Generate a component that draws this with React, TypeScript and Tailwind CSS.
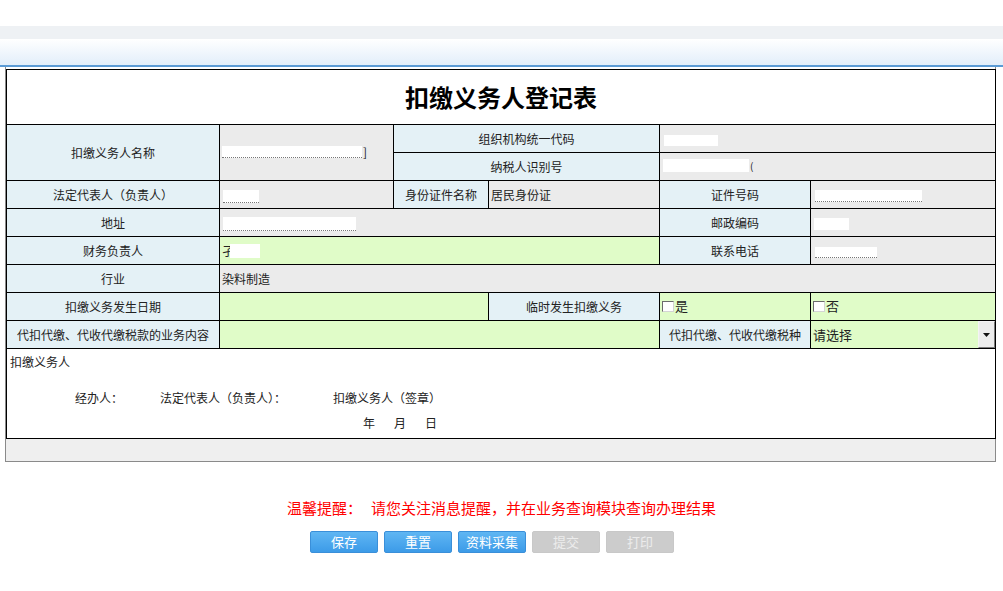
const label = "border border-black bg-[#e4f1f6] text-center";
const gray = "border border-black bg-[#ebebeb] text-left pl-[2px]";
const green = "border border-black bg-[#e0fcc8] text-left pl-[2px]";

function Blank({ className }: { className: string }) {
  return (
    <span
      className={
        "inline-block align-middle bg-white border-b border-dotted border-[#777] " +
        className
      }
    />
  );
}

function Check({ text }: { text: string }) {
  return (
    <span className="inline-flex items-center">
      <span className="inline-block w-[12px] h-[11px] bg-white border border-t-[#6b6b6b] border-l-[#6b6b6b] border-b-[#d4d4d4] border-r-[#d4d4d4]" />
      <span className="ml-[1px] text-[13px]">{text}</span>
    </span>
  );
}

function Btn({ text, disabled }: { text: string; disabled?: boolean }) {
  return disabled ? (
    <button className="w-[68px] h-[22px] rounded-[2px] border border-[#c8c8c8] bg-[#cccccc] text-[13px] text-[#ececec]">
      {text}
    </button>
  ) : (
    <button className="w-[68px] h-[22px] rounded-[2px] border border-[#3a8fd9] bg-gradient-to-b from-[#5fb6f3] to-[#3c9be8] text-[13px] text-white">
      {text}
    </button>
  );
}

export default function App() {
  return (
    <div className="min-h-[591px] bg-white font-['Noto_Sans_CJK_SC','Liberation_Sans',sans-serif] text-[#222]">
      {/* top bands */}
      <div className="h-[26px] bg-white" />
      <div className="h-[13px] bg-[#eef1f4]" />
      <div className="h-[26px] bg-gradient-to-b from-white to-[#e2eefa]" />
      <div className="h-[2px] bg-[#5b9bd5]" />

      {/* form */}
      <div className="ml-[5px] w-[991px] border-x border-b border-[#8a8a8a] pt-[2px]">
        <table className="w-full table-fixed border-collapse border border-black text-[12px] leading-[16px]">
          <colgroup>
            <col className="w-[213px]" />
            <col className="w-[174px]" />
            <col className="w-[95px]" />
            <col className="w-[171px]" />
            <col className="w-[151px]" />
            <col className="w-[185px]" />
          </colgroup>
          <tbody>
            <tr className="h-[55px]">
              <td colSpan={6} className="border border-black bg-white text-center text-[24px] font-bold text-black">
                扣缴义务人登记表
              </td>
            </tr>
            <tr className="h-[28px]">
              <td rowSpan={2} className={label}>扣缴义务人名称</td>
              <td rowSpan={2} className={gray}>
                <span className="inline-flex items-center">
                  <Blank className="w-[140px] h-[12px]" />
                  <span className="ml-[1px]">]</span>
                </span>
              </td>
              <td colSpan={2} className={label}>组织机构统一代码</td>
              <td colSpan={2} className={gray}>
                <Blank className="ml-[2px] w-[54px] h-[11px] border-b-0" />
              </td>
            </tr>
            <tr className="h-[28px]">
              <td colSpan={2} className={label}>纳税人识别号</td>
              <td colSpan={2} className={gray}>
                <span className="inline-flex items-center">
                  <Blank className="ml-[1px] w-[86px] h-[13px] border-b-0" />
                  <span className="ml-[1px] text-[10px]">(</span>
                </span>
              </td>
            </tr>
            <tr className="h-[28px]">
              <td className={label}>法定代表人（负责人）</td>
              <td className={gray}>
                <Blank className="ml-[1px] w-[36px] h-[13px]" />
              </td>
              <td className={label}>身份证件名称</td>
              <td className={gray}>居民身份证</td>
              <td className={label}>证件号码</td>
              <td className={gray}>
                <Blank className="ml-[2px] w-[107px] h-[12px] border-dashed" />
              </td>
            </tr>
            <tr className="h-[28px]">
              <td className={label}>地址</td>
              <td colSpan={3} className={gray}>
                <Blank className="ml-[1px] w-[133px] h-[14px]" />
              </td>
              <td className={label}>邮政编码</td>
              <td className={gray}>
                <Blank className="ml-[1px] w-[35px] h-[12px] border-b-0" />
              </td>
            </tr>
            <tr className="h-[28px]">
              <td className={label}>财务负责人</td>
              <td colSpan={3} className={green}>
                <span className="inline-flex items-center">
                  <span>孑</span>
                  <Blank className="-ml-[4px] w-[30px] h-[14px] border-b-0" />
                </span>
              </td>
              <td className={label}>联系电话</td>
              <td className={gray}>
                <Blank className="ml-[2px] w-[62px] h-[11px] border-dashed" />
              </td>
            </tr>
            <tr className="h-[28px]">
              <td className={label}>行业</td>
              <td colSpan={5} className={gray}>染料制造</td>
            </tr>
            <tr className="h-[28px]">
              <td className={label}>扣缴义务发生日期</td>
              <td colSpan={2} className={green} />
              <td className={label}>临时发生扣缴义务</td>
              <td className={green}>
                <Check text="是" />
              </td>
              <td className={green}>
                <Check text="否" />
              </td>
            </tr>
            <tr className="h-[28px]">
              <td className={label}>代扣代缴、代收代缴税款的业务内容</td>
              <td colSpan={3} className={green} />
              <td className={label}>代扣代缴、代收代缴税种</td>
              <td className="border border-black bg-[#e0fcc8] p-0">
                <div className="flex h-[27px] items-center justify-between">
                  <span className="pl-[2px] text-[13px]">请选择</span>
                  <span className="flex h-full w-[17px] items-center justify-center border border-t-[#f4f4f4] border-l-[#f4f4f4] border-b-[#7a7a7a] border-r-[#7a7a7a] bg-[#ececec]">
                    <svg width="7" height="4" viewBox="0 0 7 4">
                      <path d="M0 0h7L3.5 4z" fill="#111" />
                    </svg>
                  </span>
                </div>
              </td>
            </tr>
            <tr className="h-[90px]">
              <td colSpan={6} className="border border-black bg-white align-top pl-[3px] pt-[5px]">
                <div>扣缴义务人</div>
                <div className="mt-[20px] flex">
                  <span className="ml-[65px]">经办人：</span>
                  <span className="ml-[37px]">法定代表人（负责人）：</span>
                  <span className="ml-[47px]">扣缴义务人（签章）</span>
                </div>
                <div className="mt-[9px] flex gap-[19px] pl-[353px]">
                  <span>年</span>
                  <span>月</span>
                  <span>日</span>
                </div>
              </td>
            </tr>
          </tbody>
        </table>
        <div className="h-[22px] bg-[#efefef]" />
      </div>

      {/* notice */}
      <div className="mt-[36px] flex justify-center text-[15px] leading-[20px] text-[#ff0000]">
        <span>温馨提醒：</span>
        <span className="ml-[9px]">请您关注消息提醒，并在业务查询模块查询办理结果</span>
      </div>

      {/* actions */}
      <div className="mt-[13px] flex justify-center gap-[6px] pr-[19px]">
        <Btn text="保存" />
        <Btn text="重置" />
        <Btn text="资料采集" />
        <Btn text="提交" disabled />
        <Btn text="打印" disabled />
      </div>
    </div>
  );
}
